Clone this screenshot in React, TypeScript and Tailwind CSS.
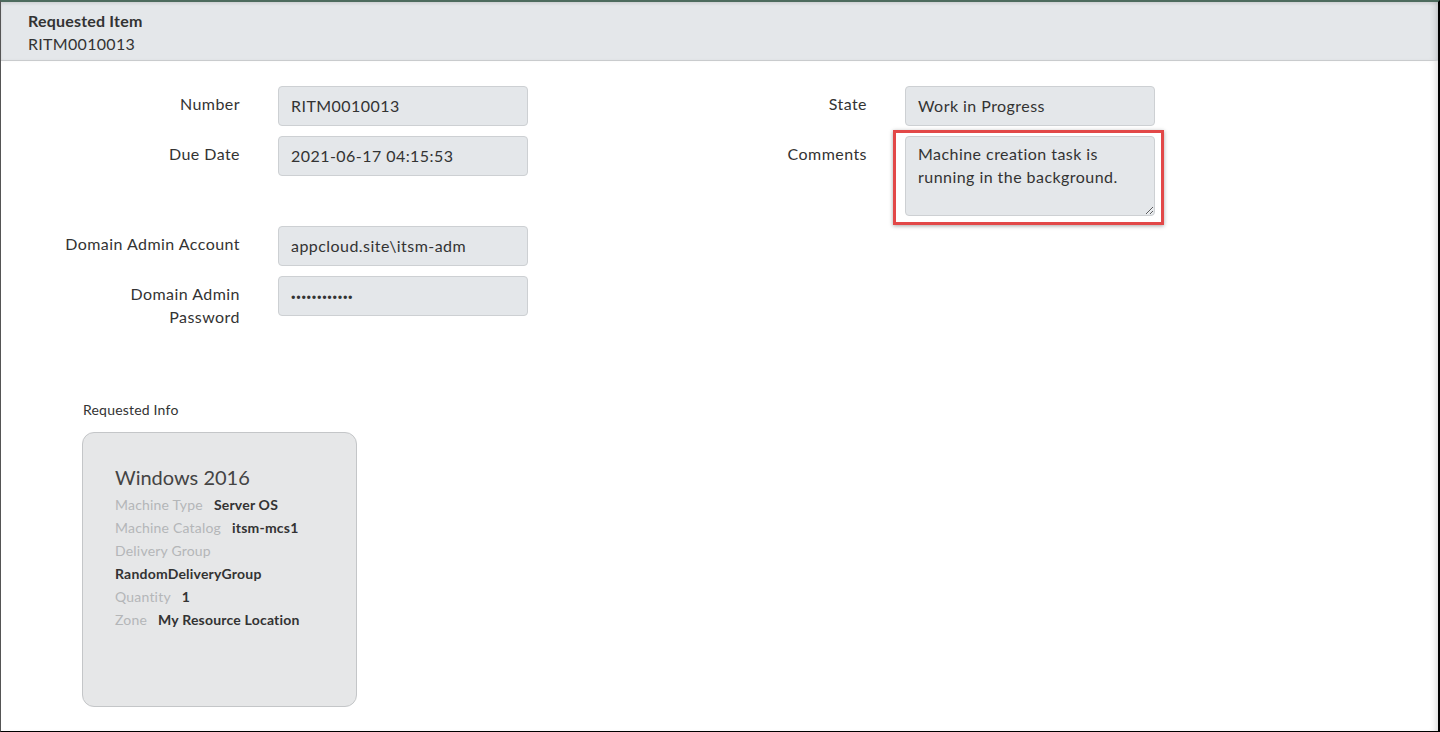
import React from "react";

const font = { fontFamily: "Lato, 'Open Sans', sans-serif" };

function Field({ label, value, labelWidth, valueClass = "" }: { label: React.ReactNode; value: string; labelWidth: string; valueClass?: string }) {
  return (
    <div className="flex items-start">
      <div className={`${labelWidth} shrink-0 text-right pt-[6px] leading-[23px] text-[16px] tracking-[0.45px] text-[#333]`}>{label}</div>
      <div className={`ml-[38px] w-[250px] h-[40px] bg-[#e4e7ea] border border-[#cdd0d3] rounded-[4px] px-[12px] pb-[1px] flex items-center text-[16px] text-[#333] ${valueClass}`}>
        {value}
      </div>
    </div>
  );
}

function InfoRow({ k, v }: { k: string; v: string }) {
  return (
    <div className="h-[23px] flex items-center text-[14px] tracking-[0.2px]">
      <span className="text-[#b4b6b8]">{k}</span>
      <span className="ml-[11px] font-bold text-[#333]">{v}</span>
    </div>
  );
}

export default function App() {
  return (
    <div style={font} className="w-[1440px] h-[732px] overflow-hidden bg-white border-l border-l-[#555] border-b border-b-black border-r-2 border-r-black border-t-2 border-t-[#4d6b5e] flex flex-col">
      <div className="h-[59px] shrink-0 bg-[#e4e7ea] border-b border-[#c9cbcd] pl-[27px] pt-[9px] shadow-[inset_0_2px_3px_rgba(0,0,0,0.08),inset_-6px_0_6px_-4px_rgba(0,0,0,0.15)]">
        <div className="text-[16px] font-bold text-[#333] leading-[20px] tracking-[0.2px]">Requested Item</div>
        <div className="text-[16px] text-[#333] leading-[23px] mt-[1px] tracking-[0.3px]">RITM0010013</div>
      </div>
      <div className="flex-1 flex flex-col shadow-[inset_-6px_0_6px_-4px_rgba(0,0,0,0.15)]">
        <div className="flex pt-[25px]">
          <div className="w-[721px] shrink-0 flex flex-col">
            <div className="flex flex-col gap-[10px]">
              <Field label="Number" value="RITM0010013" labelWidth="w-[239px]" valueClass="tracking-[0.45px]" />
              <Field label="Due Date" value="2021-06-17 04:15:53" labelWidth="w-[239px]" valueClass="tracking-[0.45px]" />
            </div>
            <div className="flex flex-col gap-[10px] mt-[50px]">
              <Field label="Domain Admin Account" value="appcloud.site\itsm-adm" labelWidth="w-[239px]" valueClass="tracking-[0.45px]" />
              <Field
                label={<>Domain Admin<br />Password</>}
                value="············"
                labelWidth="w-[239px]"
                valueClass="font-black tracking-[0.7px]"
              />
            </div>
          </div>
          <div className="flex flex-col gap-[10px]">
            <Field label="State" value="Work in Progress" labelWidth="w-[145px]" valueClass="tracking-[0.45px]" />
            <div className="flex items-start">
              <div className="w-[145px] shrink-0 text-right pt-[6px] leading-[23px] text-[16px] tracking-[0.45px] text-[#333]">Comments</div>
              <div className="ml-[26px] -mt-[6px] pl-[9px] pt-[3px] pr-[6px] pb-[6px] border-[3px] border-[#e24848] shadow-[0_1px_4px_rgba(0,0,0,0.35)]">
                <textarea
                  readOnly
                  value={"Machine creation task is running in the background."}
                  style={font}
                  className="block w-[250px] h-[80px] bg-[#e4e7ea] border border-[#cdd0d3] rounded-[4px] px-[12px] pt-[5px] text-[16px] leading-[23px] tracking-[0.45px] text-[#333] outline-none"
                />
              </div>
            </div>
          </div>
        </div>
        <div className="pl-[81px] mt-[74px]">
          <div className="ml-[1px] text-[14px] tracking-[0.2px] text-[#333] leading-[16px]">Requested Info</div>
          <div className="mt-[14px] w-[275px] h-[275px] bg-[#e6e7e8] border border-[#c4c6c8] rounded-[12px] pl-[32px] pt-[31px]">
            <div className="text-[20px] text-[#444] leading-[26px]">Windows 2016</div>
            <div className="mt-[3px]">
              <InfoRow k="Machine Type" v="Server OS" />
              <InfoRow k="Machine Catalog" v="itsm-mcs1" />
              <div className="h-[23px] flex items-center text-[14px] tracking-[0.2px] text-[#b4b6b8]">Delivery Group</div>
              <div className="h-[23px] flex items-center text-[14px] tracking-[0.2px] font-bold text-[#333]">RandomDeliveryGroup</div>
              <InfoRow k="Quantity" v="1" />
              <InfoRow k="Zone" v="My Resource Location" />
            </div>
          </div>
        </div>
      </div>
    </div>
  );
}
